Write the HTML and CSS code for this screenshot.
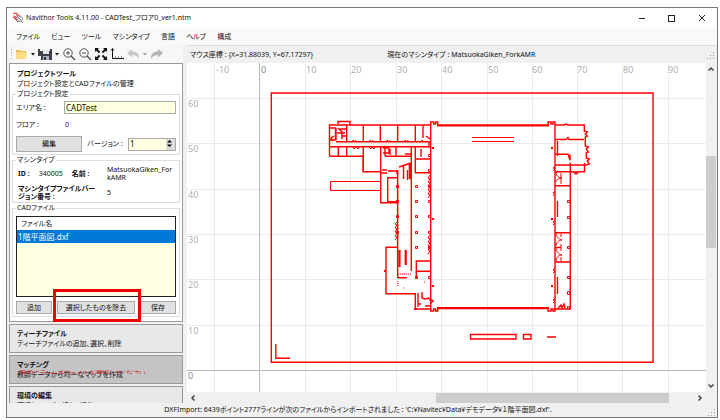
FILE: index.html
```html
<!DOCTYPE html>
<html lang="ja">
<head>
<meta charset="utf-8">
<title>Navithor Tools</title>
<link rel="stylesheet" href="styles.css">
</head>
<body>
<div class="window">
  <header class="titlebar">
    <svg class="app-icon" width="12" height="12" viewBox="0 0 12 12" fill="none"><path d="M1 2l3-1 2 2 2 1M2 4l3 2M1 5l4 3" stroke="#e04444" stroke-width="1.3"/><path d="M4 3l5 5M3 7l3 3 2-1" stroke="#777" /><circle cx="8" cy="7" r="2.4" stroke="#888"/><path d="M9 9l2 2" stroke="#666"/></svg>
    <h1 class="title">Navithor Tools 4.11.00 - CADTest_フロア0_ver1.ntm</h1>
    <button class="win-btn" aria-label="最小化"><svg width="8" height="8"><path d="M1 4.500h6" stroke="#222"/></svg></button>
    <button class="win-btn" aria-label="最大化"><svg width="8" height="8"><rect x=".5" y="1.500" width="6" height="6" fill="none" stroke="#222"/></svg></button>
    <button class="win-btn" aria-label="閉じる"><svg width="8" height="8"><path d="M1 1l6 6M7 1l-6 6" stroke="#222"/></svg></button>
  </header>
  <nav class="menu">
    <button>ファイル</button><button>ビュー</button><button>ツール</button><button>マシンタイプ</button><button>言語</button><button>ヘルプ</button><button>構成</button>
  </nav>
  <div class="workspace">
    <aside class="sidebar">
      <div class="toolbar">
        <svg width="4" height="12"><path d="M1.500 1v11" stroke="#aaa" stroke-dasharray="1 2"/></svg>
        <button class="tool" aria-label="開く"><svg width="14" height="14"><path d="M2 3h4l1 1h5v8H2z" fill="#e9bd55"/><path d="M2 5h11l-1 7H2z" fill="#ffdc83"/></svg></button>
        <button class="drop" aria-label="開くメニュー"><svg width="6" height="4"><path d="M1 1h4L3 3.500z" fill="#111"/></svg></button>
        <button class="tool" aria-label="保存する"><svg width="14" height="14"><path d="M0 2h2v2h10V2h2v11H3V9H0z" fill="#3d4248"/><path d="M5 3h6v4H5z" fill="#dfe5ea"/><path d="M5 9h6v4H5z" fill="#a4b4c4"/><path d="M6 10h2v3H6z" fill="#333"/></svg></button>
        <button class="drop" aria-label="保存メニュー"><svg width="6" height="4"><path d="M1 1h4L3 3.500z" fill="#111"/></svg></button>
        <button class="tool" aria-label="拡大"><svg width="14" height="14" fill="none" stroke="#555"><circle cx="6" cy="6" r="4.200"/><path d="M4 6h4M6 4v4"/><path d="M9 9l4 4" stroke-width="1.600"/></svg></button>
        <button class="tool" aria-label="縮小"><svg width="14" height="14" fill="none" stroke="#555"><circle cx="6" cy="6" r="4.200"/><path d="M4 6h4"/><path d="M9 9l4 4" stroke-width="1.600"/></svg></button>
        <button class="tool" aria-label="全体表示"><svg width="14" height="14"><g fill="none" stroke="#111" stroke-width="1.800"><path d="M2 2l3.500 3.500M12 2L8.500 5.500M2 12l3.500-3.500M12 12L8.500 8.500"/></g><path d="M1 1h4L1 5zM13 1v4L9 1zM1 13V9l4 4zM13 13H9l4-4z" fill="#111"/></svg></button>
        <button class="tool" aria-label="計測"><svg width="14" height="14" fill="none" stroke="#111"><path d="M2.500 2v9.500H14"/><path d="M1 3.500l1.500-2L4 3.500"/><path d="M5.500 9v2M8.500 9v2M11.500 9v2" stroke="#999"/></svg></button>
        <button class="tool" aria-label="元に戻す"><svg width="14" height="14"><path d="M1 6l5-4v2.500c5 0 7 2 7 7C11 9 9 8 6 8v2.500z" fill="#c6c6c6"/></svg></button>
        <button class="drop" aria-label="履歴"><svg width="6" height="4"><path d="M1 1h4L3 3.500z" fill="#999"/></svg></button>
        <button class="tool" aria-label="やり直し"><svg width="14" height="14"><path d="M13 6L8 2v2.500c-5 0-7 2-7 7C3 9 5 8 8 8v2.500z" fill="#b4b4b4"/></svg></button>
      </div>
      <div class="panels">
        <section class="panel open">
          <h2>プロジェクトツール</h2>
          <p>プロジェクト設定とCADファイルの管理</p>
          <fieldset class="project">
            <legend>プロジェクト設定</legend>
            <label for="area">エリア名 :</label><input id="area" class="field" value="CADTest">
            <span>フロア :</span><span class="floor">0</span>
            <div class="version">
              <button class="btn edit">編集</button>
              <label for="ver">バージョン :</label>
              <div class="spinner field"><input id="ver" value="1">
                <div class="arrows"><button aria-label="増やす"><svg width="7" height="4"><path d="M1 3.500h5L3.500 1z"/></svg></button><button aria-label="減らす"><svg width="7" height="4"><path d="M1 .500h5L3.500 3z"/></svg></button></div>
              </div>
            </div>
          </fieldset>
          <fieldset class="machine">
            <legend>マシンタイプ</legend>
            <div class="ident"><b>ID :</b><span class="small">340005</span><b>名前 :</b></div><span class="small">MatsuokaGiken_ForkAMR</span>
            <b class="file-version">マシンタイプファイルバー<br>ジョン番号 :</b><span class="small">5</span>
          </fieldset>
          <fieldset class="cad">
            <legend>CADファイル</legend>
            <div class="files"><table><thead><tr><th>ファイル名</th></tr></thead><tbody><tr><td>1階平面図.dxf</td></tr></tbody></table></div>
            <div class="actions"><button class="btn">追加</button><div class="marked"><button class="btn">選択したものを除去</button></div><button class="btn">保存</button></div>
          </fieldset>
        </section>
        <section class="panel"><h2>ティーチファイル</h2><p>ティーチファイルの追加、選択、削除</p></section>
        <section class="panel selected"><h2>マッチング</h2><p>教師データから均一なマップを作成<span class="warning">最初にティーチファイルを選択してください</span></p></section>
        <section class="panel"><h2>環境の編集</h2><p>環境とマップの追加、編集</p></section>
      </div>
    </aside>
    <main class="view">
      <div class="info"><span>マウス座標 : {X=31.88039, Y=67.17297}</span><span>現在のマシンタイプ : MatsuokaGiken_ForkAMR</span>
        <svg class="grip" width="8" height="8"><path d="M6 1h1v1H6zM3 4h1v1H3zM6 4h1v1H6zM0 7h1v1H0zM3 7h1v1H3zM6 7h1v1H6z"/></svg></div>
      <div class="canvas">
        <svg class="map" width="100%" height="100%">
          <g transform="translate(-187 -63)">
            <g class="gridlines">
              <path d="M214.500 63v900M305.500 63v900M350.500 63v900M396.500 63v900M441.500 63v900M487.500 63v900M532.500 63v900M577.500 63v900M622.500 63v900M668.500 63v900"/>
              <path d="M187 98.500h2000M187 143.500h2000M187 189.500h2000M187 234.500h2000M187 279.500h2000M187 325.500h2000"/>
              <path class="axis" d="M259.500 63v900M187 370.500h2000"/>
            </g>
            <g class="ticks">
              <text x="216" y="73">-10</text><text class="origin" x="261" y="73">0</text><text x="306" y="73">10</text><text x="351" y="73">20</text><text x="397" y="73">30</text><text x="442" y="73">40</text><text x="488" y="73">50</text><text x="532" y="73">60</text><text x="577" y="73">70</text><text x="623" y="73">80</text><text x="668" y="73">90</text>
              <text x="188" y="107">60</text><text x="188" y="152">50</text><text x="188" y="198">40</text><text x="188" y="243">30</text><text x="188" y="288">20</text><text x="188" y="334">10</text><text class="origin" x="188" y="379">0</text>
            </g>
            <g class="plan">
              <path class="outer" d="M271.300 93H653v269.200H271.300zM275.800 344v14.200H290M470.500 334.500h45.500v4.500h-45.500zM523.500 334.500h7.500v4.500h-7.500zM547 337h9"/>
              <path class="thin" d="M472 137.500h42M472 141.500h42M330.500 181.500h50v9h-50z"/>
              <path class="wall" d="M329.500 156.200V125h101.200v184H415.300v-15.300H386v-46.400h11.700M329.500 156.200h33.500v15.500h18M338 124v-2.500h12v3M336 141.700h94M329.500 146.700h101M346.700 125v16M363.300 125v16M380.300 125v16M397.700 125v16M415.300 125v17M423 125v13M338.300 147v9M346.700 147v9M363.300 147v24M380.700 147v55.700h17M387.700 177.700h10v24h-10zM397.700 170v108M411.300 147v124M415.300 147v25.700h15M415 159h15M421 149v8M385 156.200h26M385 147v9M396 147v9M416.300 278v-17h14M416 271.300h14M397.700 277.700h9M403.500 166v13M399 167l12-4M407.500 170v10"/>
              <path class="thick" d="M437 125.400h112M437 308.200h112M399.500 250v17M405.700 250v15M409.800 164v15"/>
              <path class="wall" d="M430.700 125v-3h3v2h2v-2h2v3M548 125v-3h3v2h2v-2h2v3M430.700 308v3h3v-2h2v2h2v-3M548 308v3h3v-2h2v2h2v-3M336 128v12M333 141l-2-3 3-2M337 133h8M342 131v8M338 128l4 4M329.500 128h6v12h-6M340 129h6M342 136h4"/>
              <path class="wall" d="M555 125v184h15.300V162.700M555 125h9l2-1 2 1h16.300v6l3 1-2 2 2 2-2 1v9l3 1-2 2 2 3-2 1v5l3 1-2 2 2 3-3 1H555M584.500 163v8.700H578l-1 2-1-2-1 2-1-2H555M555 139.500h11l2-2 1 2h15M555 154.300h13l2 6v-6M557.500 141v15M570.300 171v14.700M555 185.700h15M557.500 201v16M555 232.700h15M555 262h15M557.500 277v17M555 247.500h6M558 308l3-3 1 3 2-4 1 4"/>
              <path class="thin" d="M556 172c0 3 2 6 6 6-3 0-6 2-6 4M561 173v11M556 233c0 3 2 6 6 7-4 0-6 3-6 6M556 248c0 3 2 6 6 7-4 0-6 3-6 6M561 234v3M561 244v7M561 257v4"/>
              <path class="thin" d="M430 175l-2 3 2 1-2 3 2 1-2 3 2 1-2 3 2 1-2 3 2 1-2 3M430 235l-2 3 2 1-2 3 2 1-2 3 2 1-2 3 2 1-2 3M397 222l-2 2 2 1-2 3 2 1-2 3 2 1-2 3 2 1-2 3M555 166l-2 2 2 1-2 2M555 191l-2 2 2 1-2 2M555 220l-2 2 2 1-2 2M555 268l-2 2 2 1-2 2M555 298l-2 2 2 1-2 2M352 142l1-2 2 2 1-2M369 142l1-2 2 2 1-2M386 142l1-2 2 2 1-2M404 142l1-2 2 2 1-2M421 142l1-2 2 2M353 147l1 2 2-2 2 2 1-2M369 147l2 2 1-2 2 2 1-2"/>
              <path class="wall" d="M418 293v14M422 292v6l3 1 4-1M418 304h3M429 299l4 2-3 3M425 306h5M382 170h5M388 171h9v3M383 148h6v5h-6M390 149v6M405 154h6M429 142v5M426 136l4 3M381 173h6"/>
              <path class="dotted" d="M398 274h13M398 281v6M403 288h2M424 282h2"/>
              <g class="posts">
                <path d="M415.500 185.500h2v2h-2zM415.500 200.500h2v2h-2zM415.500 215.500h2v2h-2zM415.500 231.500h2v2h-2zM415.500 246.500h2v2h-2zM415.500 276.500h2v2h-2zM428.500 154.500h2v2h-2zM428.500 169.500h2v2h-2zM428.500 185.500h2v2h-2zM428.500 200.500h2v2h-2zM428.500 215.500h2v2h-2zM428.500 231.500h2v2h-2zM428.500 246.500h2v2h-2zM428.500 276.500h2v2h-2zM396.500 185.500h2v2h-2zM396.500 200.500h2v2h-2zM396.500 215.500h2v2h-2zM396.500 231.500h2v2h-2z"/>
                <path d="M567.500 200.500h2v2h-2zM567.500 216.500h2v2h-2zM567.500 246.500h2v2h-2zM567.500 276.500h2v2h-2zM567.500 291.500h2v3h-2zM567.500 306.500h2v2h-2z"/>
              </g>
              <path class="dots" d="M432 147h2v2h-2zM432 218h2v2h-2zM432 285h2v2h-2zM551 147h2v2h-2zM551 218h2v2h-2zM551 285h2v2h-2zM384 270h2v2h-2zM414 308h3v2h-3z"/>
            </g>
          </g>
        </svg>
        <div class="vscroll"><svg width="8" height="6"><path d="M1.500 4.500L4 2l2.500 2.500"/></svg><div class="vtrack"><div class="thumb"></div></div><svg width="8" height="6"><path d="M1.500 1.500L4 4l2.500-2.500"/></svg></div>
        <div class="hscroll"><svg width="6" height="8"><path d="M4.500 1.500L2 4l2.500 2.500"/></svg><div class="htrack"><div class="thumb"></div></div><svg width="6" height="8"><path d="M1.500 1.500L4 4 1.500 6.500"/></svg></div>
      </div>
    </main>
  </div>
  <footer class="status"><span>DXFImport: 6439ポイント2777ラインが次のファイルからインポートされました : 'C:¥Navitec¥Data¥デモデータ¥１階平面図.dxf'.</span>
    <svg class="grip" width="8" height="8"><path d="M6 1h1v1H6zM3 4h1v1H3zM6 4h1v1H6zM0 7h1v1H0zM3 7h1v1H3zM6 7h1v1H6z"/></svg></footer>
</div>
</body>
</html>
```
FILE: styles.css
```css
* { box-sizing: border-box; }
body {
  margin: 0;
  background: #fff;
  color: #111;
  font: 7px/10px "Noto Sans", "Noto Sans CJK JP", sans-serif;
  font-feature-settings: "palt";
}
h1, h2, p { margin: 0; font-size: inherit; }
svg { display: block; flex: none; }
button, input {
  font: inherit;
  font-feature-settings: inherit;
  color: inherit;
  border: 0;
  padding: 0;
  margin: 0;
  background: none;
}
.window {
  display: flex;
  flex-direction: column;
  height: calc(100vh - 9px);
  margin: 7px 2px 2px 6px;
  border: 1px solid #777;
  background: #f0f0f0;
}
.titlebar { display: flex; align-items: center; height: 20px; padding: 0 11px 0 5px; background: #fff; }
.title { flex: 1; margin-left: 2px; font-weight: 400; }
.win-btn { width: 8px; margin-left: 22px; }
.menu { display: flex; align-items: center; gap: 11px; height: 17px; padding-left: 9px; background: #f9f9f9; white-space: nowrap; }
.workspace { display: flex; flex: 1; min-height: 0; }
.sidebar { display: flex; flex-direction: column; flex: none; width: 180px; padding: 0 4px 0 2px; }
.toolbar { display: flex; align-items: center; flex: none; height: 18px; padding-left: 1px; background: #f7f7f7; }
.tool { width: 14px; height: 14px; margin-right: 2px; }
.drop { width: 6px; margin-right: 2px; }
.panels { display: flex; flex-direction: column; gap: 2px; flex: 1; min-height: 0; overflow: hidden; }
.panel { flex: none; height: 29px; padding: 4px 7px; border: 1px solid #999; background: #e8e8e8; white-space: nowrap; }
.panel.open { height: auto; padding: 5px 2px 4px; background: #fff; }
.panel.open > h2, .panel.open > p { padding-left: 5px; }
.panel.selected { background: #c4c4c4; }
.panel.selected p { position: relative; }
.warning { position: absolute; left: 2px; top: 0; height: 4px; overflow: hidden; line-height: 8px; color: #c22; }
fieldset { display: grid; min-width: 0; margin: 0; padding: 0 3px; border: 1px solid #ddd; }
legend { padding: 0 1px; line-height: 10px; }
.project { grid-template-columns: 48px 1fr; align-items: center; row-gap: 2px; height: 66px; }
.floor { padding-left: 1px; }
.field { width: 100%; height: 13px; padding: 0 1px; border: 1px solid #aaa; background: #ffffe1; font-size: 8px; }
.version { grid-column: span 2; display: flex; align-items: center; justify-content: space-between; }
.btn { height: 13px; border: 1px solid #aaa; background: #e1e1e1; white-space: nowrap; }
.edit { width: 66px; height: 16px; }
.spinner { display: flex; width: 48px; padding-right: 0; }
.spinner input { flex: 1; min-width: 0; }
.arrows { display: flex; flex-direction: column; width: 9px; background: #ddd; }
.arrows button { height: 5px; }
.machine { grid-template-columns: 91px 1fr; row-gap: 2px; align-items: center; height: 48px; padding-right: 6px; line-height: 8px; white-space: normal; }
.ident { display: flex; align-items: center; gap: 9px; padding-left: 2px; white-space: nowrap; }
.file-version { padding-left: 2px; }
.small { line-height: 8px; overflow-wrap: anywhere; word-break: break-all; }
.cad { height: 114px; align-content: start; gap: 4px; }
.files { height: 81px; margin-top: 3px; border: 1px solid #222; background: #ffffe1; }
table { width: 100%; border-collapse: collapse; }
th, td { height: 13px; padding: 0 4px; text-align: left; font-weight: 400; }
th { background: #fff; }
td { padding-left: 1px; background: #0078d7; color: #fff; font-size: 8px; }
.actions { display: grid; grid-template-columns: 36px 1fr 36px; gap: 5px; }
.marked { position: relative; }
.marked .btn { width: 100%; }
.marked::after { content: ""; position: absolute; inset: -12px -6px -8px -4px; border: 3px solid #f00000; pointer-events: none; }
.view { display: flex; flex-direction: column; flex: 1; min-width: 0; }
.info { display: flex; align-items: center; gap: 74px; height: 18px; padding: 0 2px 0 3px; border-top: 1px solid #ddd; }
.grip { margin-left: auto; fill: #999; }
.canvas { display: grid; grid-template: 1fr 11px / 1fr 10px; flex: 1; min-height: 0; margin-right: 1px; }
.map { min-width: 0; min-height: 0; overflow: hidden; background: #fff; }
.vscroll, .hscroll { display: flex; align-items: center; justify-content: space-between; }
.vscroll { flex-direction: column; padding: 3px 0; }
.hscroll { padding: 0 3px; }
.vscroll path, .hscroll path { fill: none; stroke: #444; stroke-width: 1.5; }
.vtrack { flex: 1; width: 10px; padding-top: 84px; }
.htrack { flex: 1; height: 10px; padding-left: 240px; }
.thumb { background: #cdcdcd; }
.vtrack .thumb { height: 92px; }
.htrack .thumb { width: 233px; height: 10px; }
.gridlines path { stroke: #ebebeb; }
.gridlines .axis { stroke: #b8b8b8; }
.ticks { fill: #b0b0b0; font-size: 9px; }
.ticks .origin { fill: #888; }
.plan path { fill: none; stroke: #f00; }
.plan .outer { stroke-width: 1.4; }
.plan .wall { stroke-width: 1.4; }
.plan .thin { stroke-width: 1; }
.plan .thick { stroke-width: 2.2; }
.plan .dotted { stroke-dasharray: 1 1; }
.plan .dots { fill: #f00; stroke: none; }
.status { position: relative; display: flex; align-items: center; justify-content: center; height: 14px; padding-right: 8px; flex: none; }
.status .grip { position: absolute; right: 1px; bottom: 1px; }
```
